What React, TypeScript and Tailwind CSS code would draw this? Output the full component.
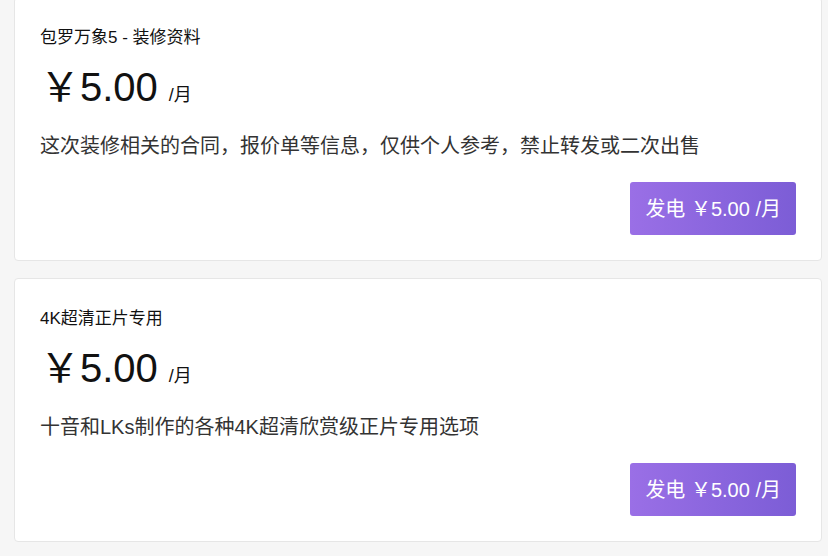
import React from 'react';

const FONT = '"Liberation Sans", "Noto Sans CJK SC", sans-serif';

interface Plan {
    id: string;
    title: string;
    price: string;
    desc: string;
}

const PLANS: Plan[] = [
    { id: 'a', title: '包罗万象5 - 装修资料', price: '5.00', desc: '这次装修相关的合同，报价单等信息，仅供个人参考，禁止转发或二次出售' },
    { id: 'b', title: '4K超清正片专用', price: '5.00', desc: '十音和LKs制作的各种4K超清欣赏级正片专用选项' },
];

function PlanCard({ plan }: { plan: Plan }) {
    return (
        <div className="bg-white border border-[#e6e6e6] rounded-[4px] px-[25px] pt-[28px] pb-[25px]">
            <p className="text-[17px] leading-[24px] text-[#111]">{plan.title}</p>
            <div className="mt-[13px] h-[48px] flex items-baseline text-[#111]">
                <span className="text-[40px] leading-[48px]">￥{plan.price}</span>
                <span className="text-[18px] leading-none ml-[11px]">/月</span>
            </div>
            <p className="mt-[20px] text-[20px] leading-[30px] text-[#333]">{plan.desc}</p>
            <div className="mt-[21px] flex justify-end">
                <button
                    type="button"
                    className="h-[53px] px-[15px] rounded-[3px] text-white text-[20px] bg-gradient-to-r from-[#9a6fe6] to-[#7c5dd6]"
                >
                    发电 ￥{plan.price} /月
                </button>
            </div>
        </div>
    );
}

export default function App() {
    return (
        <div className="min-h-screen bg-[#f6f6f6] overflow-hidden" style={{ fontFamily: FONT }}>
            <div className="pl-[14px] pr-[6px] -mt-[3px] flex flex-col gap-[17px]">
                {PLANS.map(p => <PlanCard key={p.id} plan={p} />)}
            </div>
        </div>
    );
}
